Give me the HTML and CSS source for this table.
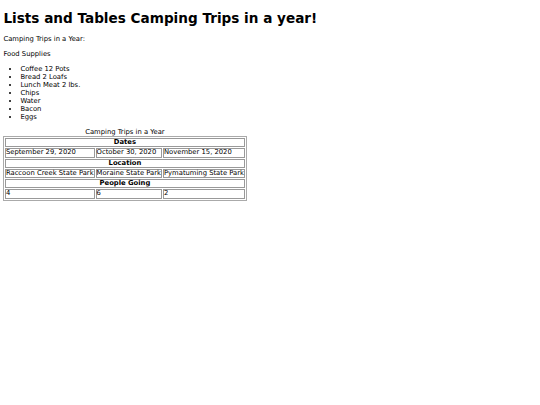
FILE: index.html
```html
<!DOCTYPE html>
<html>
<head>
<meta charset="utf-8">
<link rel="stylesheet" href="styles.css">
</head>
<body class="page">
<h1 class="title">Lists and Tables Camping Trips in a year!</h1>
<p class="text">Camping Trips in a Year:</p>
<p class="text">Food Supplies</p>
<ul class="list">
<li>Coffee 12 Pots</li>
<li>Bread 2 Loafs</li>
<li>Lunch Meat 2 lbs.</li>
<li>Chips</li>
<li>Water</li>
<li>Bacon</li>
<li>Eggs</li>
</ul>
<table class="trips">
<caption class="cap">Camping Trips in a Year</caption>
<tr><th colspan="3">Dates</th></tr>
<tr><td>September 29, 2020</td><td>October 30, 2020</td><td>November 15, 2020</td></tr>
<tr><th colspan="3">Location</th></tr>
<tr><td>Raccoon Creek State Park</td><td>Moraine State Park</td><td>Pymatuming State Park</td></tr>
<tr><th colspan="3">People Going</th></tr>
<tr><td>4</td><td>6</td><td>2</td></tr>
</table>
</body>
</html>
```
FILE: styles.css
```css
html { background: #fff; }
.page {
  margin: 3.4px;
  font-family: "DejaVu Sans", Verdana, sans-serif;
  font-size: 6.8px;
  color: #000;
}
.title {
  font-size: 13.6px;
  font-weight: bold;
  margin: 7px 0 8.5px;
}
.text { margin: 6.8px 0; }
.list {
  margin: 7.5px 0 6.8px;
  padding-left: 17px;
}
.trips {
  border: 1px solid #aaa;
  border-spacing: 1px;
  margin-left: -0.5px;
}
.cap { text-align: center; }
.trips th, .trips td {
  border: 1px solid #999;
  padding: 0;
  text-align: left;
  line-height: 7.3px;
}
.trips th { text-align: center; font-weight: bold; }
```
